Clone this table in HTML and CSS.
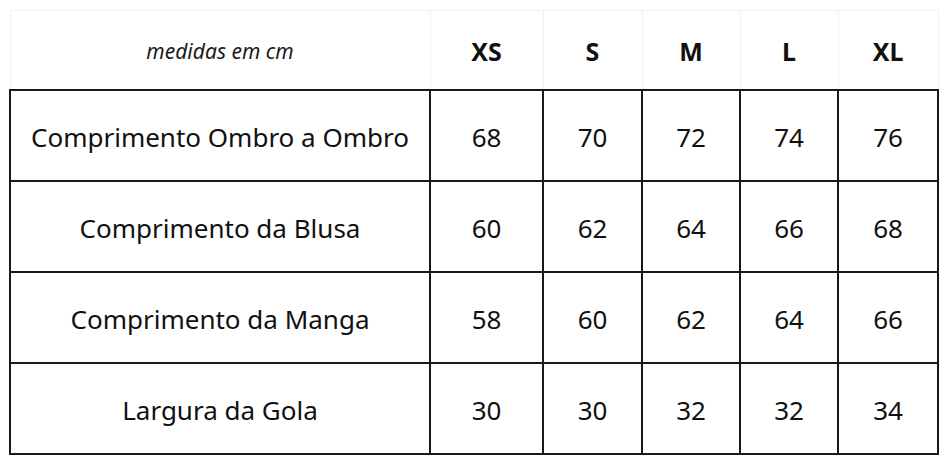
FILE: index.html
```html
<!DOCTYPE html>
<html lang="pt">
<head>
<meta charset="utf-8">
<title>Tabela de medidas</title>
<link rel="stylesheet" href="styles.css">
</head>
<body>
<table class="size-table">
  <colgroup>
    <col class="c-label">
    <col class="c-xs">
    <col class="c-s">
    <col class="c-m">
    <col class="c-l">
    <col class="c-xl">
  </colgroup>
  <thead>
    <tr class="head-row">
      <th class="unit">medidas em cm</th>
      <th>XS</th>
      <th>S</th>
      <th>M</th>
      <th>L</th>
      <th>XL</th>
    </tr>
  </thead>
  <tbody>
    <tr><td>Comprimento Ombro a Ombro</td><td>68</td><td>70</td><td>72</td><td>74</td><td>76</td></tr>
    <tr><td>Comprimento da Blusa</td><td>60</td><td>62</td><td>64</td><td>66</td><td>68</td></tr>
    <tr><td>Comprimento da Manga</td><td>58</td><td>60</td><td>62</td><td>64</td><td>66</td></tr>
    <tr><td>Largura da Gola</td><td>30</td><td>30</td><td>32</td><td>32</td><td>34</td></tr>
  </tbody>
</table>
</body>
</html>
```

FILE: styles.css
```css
html, body {
  margin: 0;
  padding: 0;
  background: #ffffff;
}

body {
  padding: 10px 0 0 9px;
  font-family: "Noto Sans", "Open Sans", sans-serif;
  color: #111111;
}

.size-table {
  border-collapse: collapse;
  table-layout: fixed;
  width: 928px;
}

.c-label { width: 420px; }
.c-xs { width: 113px; }
.c-s { width: 99px; }
.c-m { width: 98px; }
.c-l { width: 98px; }
.c-xl { width: 100px; }

.head-row th {
  height: 77px;
  padding: 1px 0 0;
  border: 1px solid #f1f1f1;
  font-size: 25px;
  font-weight: 700;
  text-align: center;
  vertical-align: middle;
}

.head-row th.unit {
  font-size: 21px;
  font-weight: 400;
  font-style: italic;
  color: #1a1a1a;
}

tbody td {
  height: 87px;
  padding: 2px 0 0;
  border: 2px solid #1a1a1a;
  font-size: 26px;
  font-weight: 400;
  text-align: center;
  vertical-align: middle;
}
```
